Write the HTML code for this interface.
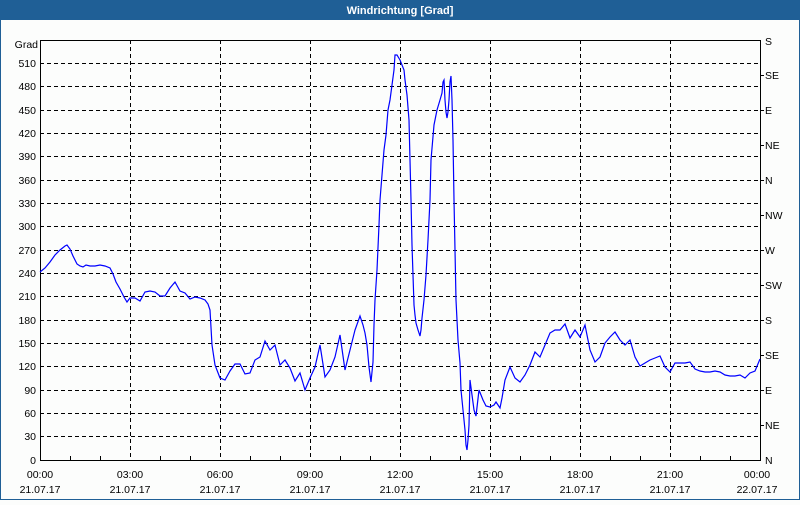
<!DOCTYPE html>
<html><head><meta charset="utf-8"><style>
html,body{margin:0;padding:0;}
body{width:800px;height:500px;overflow:hidden;background:#fcfdfc;font-family:"Liberation Sans",sans-serif;}
</style></head><body>
<svg width="800" height="500" xmlns="http://www.w3.org/2000/svg" font-family="Liberation Sans, sans-serif" font-size="10.5">
<rect x="0" y="0" width="800" height="500" fill="#fcfdfc"/>
<rect x="0" y="0" width="800" height="20" fill="#1f5f96"/>
<rect x="0.5" y="0.5" width="799" height="499" fill="none" stroke="#1f5f96" stroke-width="1"/>
<text x="400" y="14" text-anchor="middle" fill="#fff" font-weight="bold" font-size="11">Windrichtung [Grad]</text>
<g stroke="#000" stroke-width="1" stroke-dasharray="4,3" shape-rendering="crispEdges">
<path d="M40 63.5H760M40 86.5H760M40 110.5H760M40 133.5H760M40 156.5H760M40 180.5H760M40 203.5H760M40 226.5H760M40 250.5H760M40 273.5H760M40 296.5H760M40 320.5H760M40 343.5H760M40 366.5H760M40 390.5H760M40 413.5H760M40 436.5H760"/>
<path d="M130.5 40V460M220.5 40V460M310.5 40V460M400.5 40V460M490.5 40V460M580.5 40V460M670.5 40V460"/>
</g>
<g stroke="#000" stroke-width="1" fill="none" shape-rendering="crispEdges">
<path d="M40.5 40V460.5H760.5V40M40 40.5H760"/>
<path d="M70.5 460V456M100.5 460V456M160.5 460V456M190.5 460V456M250.5 460V456M280.5 460V456M340.5 460V456M370.5 460V456M430.5 460V456M460.5 460V456M520.5 460V456M550.5 460V456M610.5 460V456M640.5 460V456M700.5 460V456M730.5 460V456"/>
<path d="M760 75.5H764M760 110.5H764M760 145.5H764M760 180.5H764M760 215.5H764M760 250.5H764M760 285.5H764M760 320.5H764M760 355.5H764M760 390.5H764M760 425.5H764"/>
</g>
<g fill="#000" text-anchor="end">
<text x="38" y="48">Grad</text>
<text x="36" y="67">510</text><text x="36" y="90">480</text><text x="36" y="114">450</text><text x="36" y="137">420</text><text x="36" y="160">390</text><text x="36" y="184">360</text><text x="36" y="207">330</text><text x="36" y="230">300</text><text x="36" y="254">270</text><text x="36" y="277">240</text><text x="36" y="300">210</text><text x="36" y="324">180</text><text x="36" y="347">150</text><text x="36" y="370">120</text><text x="36" y="394">90</text><text x="36" y="417">60</text><text x="36" y="440">30</text><text x="36" y="464">0</text>
</g>
<g fill="#000">
<text x="765" y="45">S</text><text x="765" y="79">SE</text><text x="765" y="114">E</text><text x="765" y="149">NE</text><text x="765" y="184">N</text><text x="765" y="219">NW</text><text x="765" y="254">W</text><text x="765" y="289">SW</text><text x="765" y="324">S</text><text x="765" y="359">SE</text><text x="765" y="394">E</text><text x="765" y="429">NE</text><text x="765" y="464">N</text>
</g>
<g fill="#000" text-anchor="middle">
<text x="40" y="478">00:00</text><text x="130" y="478">03:00</text><text x="220" y="478">06:00</text><text x="310" y="478">09:00</text><text x="400" y="478">12:00</text><text x="490" y="478">15:00</text><text x="580" y="478">18:00</text><text x="670" y="478">21:00</text><text x="757" y="478">00:00</text>
<text x="40" y="493">21.07.17</text><text x="130" y="493">21.07.17</text><text x="220" y="493">21.07.17</text><text x="310" y="493">21.07.17</text><text x="400" y="493">21.07.17</text><text x="490" y="493">21.07.17</text><text x="580" y="493">21.07.17</text><text x="670" y="493">21.07.17</text><text x="757" y="493">22.07.17</text>
</g>
<polyline fill="none" stroke="#0000ff" stroke-width="1.2" points="40,272 45,268 50,262 55,255 60,250 65,246 67,245 70,249 73,256 77,264 80,266 83,267 86,265 90,266 95,266 100,265 105,266 110,268 113,274 116,282 120,289 124,297 127,302 130,298 135,298 140,301 145,292 150,291 155,292 160,296 165,296 170,288 175,282 180,291 185,293 190,299 195,297 200,298 205,300 208,304 210,310 212,345 215,365 220,378 225,380 230,371 235,364 240,364 245,374 250,373 255,360 260,357 265,341 270,350 275,345 280,365 285,360 290,368 295,381 300,373 305,390 310,378 315,367 320,345 325,377 330,370 335,357 340,335 345,370 350,350 355,330 360,316 363,325 365,333 367,345 369,367 371,382 373,362 374,325 375,300 377,270 379,225 380,200 382,175 384,150 386,135 388,110 390,100 392,85 394,70 395,55 397,55 400,60 402,65 404,70 405,80 407,95 409,120 410,160 411,200 412,245 413,275 414,305 415,315 416,323 418,330 420,336 421,330 422,318 424,300 426,275 428,240 430,200 431,160 434,125 437,110 440,100 442,93 443,82 444,80 445,100 446,112 447,118 448,112 449,100 450,82 451,76 452,100 453,140 454,200 455,250 456,300 458,340 460,363 461,390 463,410 465,430 466,445 467,450 468,440 469,425 470,380 472,395 474,410 476,416 479,390 483,400 486,406 490,407 494,405 496,402 500,408 502,398 505,380 510,367 515,378 520,382 525,375 530,365 535,352 540,357 545,345 550,333 555,330 560,330 565,324 570,338 575,330 580,337 585,325 590,350 595,362 600,357 605,343 610,337 615,332 620,340 625,345 630,340 635,357 640,366 645,363 650,360 655,358 660,356 665,367 670,372 675,363 680,363 685,363 690,362 695,369 700,371 705,372 710,372 715,371 720,372 725,375 730,376 735,376 740,375 745,378 750,373 755,371 760,359"/>
</svg>
</body></html>
